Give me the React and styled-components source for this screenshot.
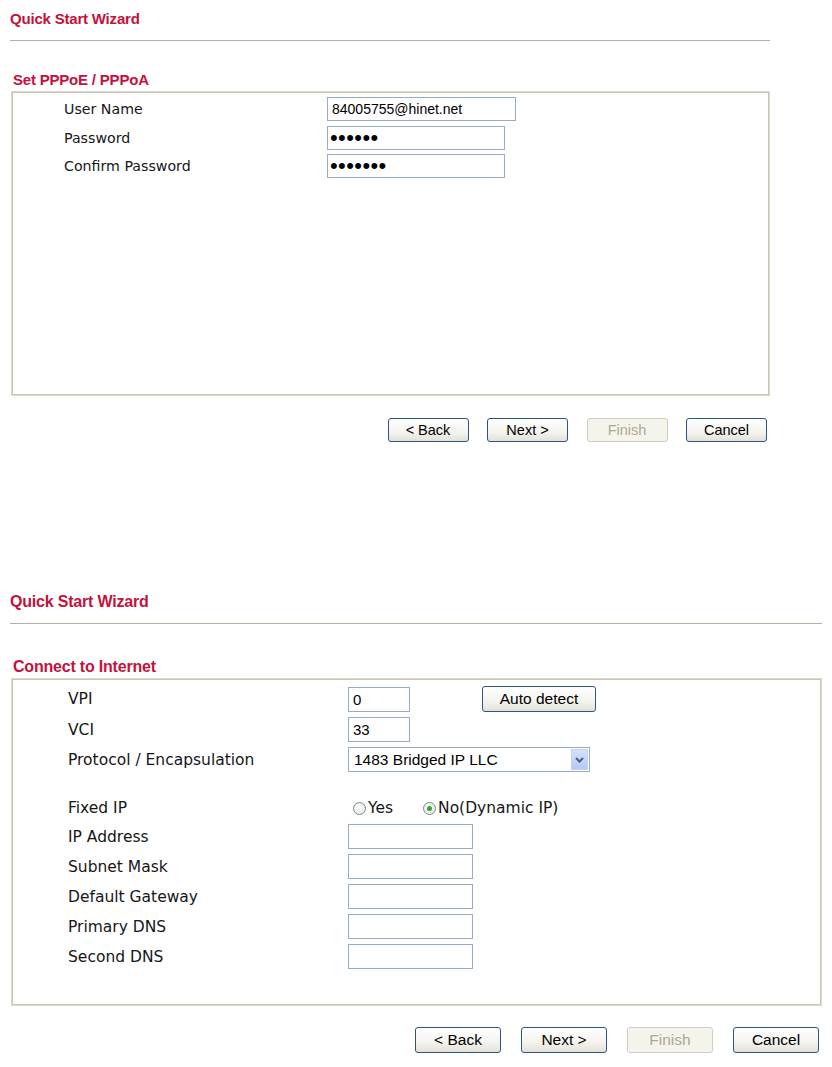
import React from 'react';
import styled, { createGlobalStyle } from 'styled-components';

const GlobalStyle = createGlobalStyle`
  html, body {
    margin: 0;
    padding: 0;
    background: #ffffff;
  }
  body {
    font-family: "DejaVu Sans", Verdana, sans-serif;
    color: #1e1e1e;
  }
`;

const Page = styled.div`
  width: 832px;
  height: 1067px;
  padding-left: 10px;
  box-sizing: border-box;
  overflow: hidden;
`;

const Wizard = styled.section`
  width: ${(p) => p.$width}px;
  padding-top: 9px;
  margin-top: ${(p) => p.$offset || 0}px;
`;

const Title = styled.h1`
  margin: 0;
  height: 20px;
  line-height: 20px;
  font-family: "Liberation Sans", Arial, sans-serif;
  font-weight: bold;
  font-size: ${(p) => p.$size}px;
  color: #c4113c;
  letter-spacing: -0.2px;
`;

const Rule = styled.hr`
  margin: ${(p) => p.$gap}px 0 0;
  border: 0;
  border-top: 1px solid #b3b0a2;
  height: 0;
`;

const SectionTitle = styled.h2`
  margin: ${(p) => p.$gap}px 0 0 3px;
  height: 20px;
  line-height: 20px;
  font-family: "Liberation Sans", Arial, sans-serif;
  font-weight: bold;
  font-size: ${(p) => p.$size}px;
  color: #c4113c;
  letter-spacing: -0.2px;
`;

const Box = styled.div`
  margin: ${(p) => p.$top}px 0 0 1px;
  height: ${(p) => p.$height}px;
  box-sizing: border-box;
  border: 2px solid #c9c6b5;
  outline: 1px solid #ddd9c8;
  outline-offset: -1px;
  padding: ${(p) => p.$padTop}px 0 0 ${(p) => p.$padLeft}px;
`;

const FormGrid = styled.div`
  display: grid;
  grid-template-columns: ${(p) => p.$labelWidth}px 1fr;
  row-gap: ${(p) => p.$gap}px;
  align-items: center;
`;

const Label = styled.div`
  height: ${(p) => p.$h}px;
  display: flex;
  align-items: center;
  font-size: ${(p) => p.$size}px;
  color: #161616;
  white-space: nowrap;
`;

const Spacer = styled.div`
  grid-column: 1 / span 2;
  height: ${(p) => p.$h}px;
`;

const Field = styled.div`
  display: flex;
  align-items: center;
  gap: ${(p) => p.$gap || 0}px;
`;

const TextBox = styled.input`
  width: ${(p) => p.$w}px;
  height: ${(p) => p.$h}px;
  box-sizing: border-box;
  border: 1px solid #98abc8;
  padding: 0 4px;
  margin: 0;
  font-family: "Liberation Sans", Arial, sans-serif;
  font-size: ${(p) => p.$size}px;
  color: #000;
  background: #fff;
  outline: none;
  &[type='password'] {
    font-size: 22px;
    letter-spacing: 0.4px;
    padding: 0 2px;
  }
`;

const SelectWrap = styled.div`
  position: relative;
  width: ${(p) => p.$w}px;
  height: 25px;
`;

const Select = styled.select`
  appearance: none;
  width: 100%;
  height: 100%;
  box-sizing: border-box;
  border: 1px solid #98abc8;
  padding: 0 0 0 5px;
  margin: 0;
  font-family: "Liberation Sans", Arial, sans-serif;
  font-size: 15.5px;
  color: #000;
  background: #fff;
  outline: none;
`;

const ArrowBox = styled.span`
  position: absolute;
  right: 2px;
  top: 2px;
  width: 17px;
  height: 21px;
  background: linear-gradient(#d6e2fb, #b4c8f4);
  border: 1px solid #c4d3f2;
  box-sizing: border-box;
  display: flex;
  align-items: center;
  justify-content: center;
  pointer-events: none;
`;

const RadioGroup = styled.div`
  display: flex;
  align-items: center;
  padding-left: 5px;
  font-size: 15.5px;
`;

const RadioLabel = styled.label`
  display: flex;
  align-items: center;
  margin-right: ${(p) => p.$mr || 0}px;
  color: #161616;
`;

const Radio = styled.input`
  appearance: none;
  width: 13px;
  height: 13px;
  margin: 0 2px 0 0;
  border: 1px solid #7a8797;
  border-radius: 50%;
  background: radial-gradient(circle at 40% 40%, #ffffff, #e2e2dc);
  box-sizing: border-box;
  display: grid;
  place-items: center;
  &:checked::after {
    content: '';
    width: 5px;
    height: 5px;
    border-radius: 50%;
    background: #2ea82e;
  }
`;

const ButtonBar = styled.div`
  display: flex;
  justify-content: flex-end;
  gap: ${(p) => p.$gap}px;
  margin-top: ${(p) => p.$top}px;
  padding-right: ${(p) => p.$right}px;
`;

const Button = styled.button`
  width: ${(p) => p.$w}px;
  height: ${(p) => p.$h}px;
  box-sizing: border-box;
  border: 1px solid #2b5588;
  border-radius: 3px;
  padding: 0;
  margin: 0;
  background: linear-gradient(#ffffff 0%, #f4f3ee 60%, #e3e1d6 100%);
  font-family: "Liberation Sans", Arial, sans-serif;
  font-size: ${(p) => p.$size}px;
  color: #000;
  cursor: default;
  &:disabled {
    border-color: #cfcdc0;
    background: #f5f4ea;
    color: #aca899;
  }
`;

const Chevron = () => (
  <svg width="9" height="6" viewBox="0 0 9 6">
    <path d="M1 1 L4.5 4.5 L8 1" fill="none" stroke="#4b5f86" strokeWidth="2" />
  </svg>
);

const Buttons = ({ w, h, size, gap, top, right }) => (
  <ButtonBar $gap={gap} $top={top} $right={right}>
    <Button $w={w} $h={h} $size={size}>&lt; Back</Button>
    <Button $w={w} $h={h} $size={size}>Next &gt;</Button>
    <Button $w={w} $h={h} $size={size} disabled>Finish</Button>
    <Button $w={w} $h={h} $size={size}>Cancel</Button>
  </ButtonBar>
);

const PppoeWizard = () => (
  <Wizard $width={760}>
    <Title $size={15}>Quick Start Wizard</Title>
    <Rule $gap={11} />
    <SectionTitle $size={15} $gap={29}>Set PPPoE / PPPoA</SectionTitle>
    <Box $top={1} $height={305} $padTop={4} $padLeft={51}>
      <FormGrid $labelWidth={263} $gap={4.5}>
        <Label $h={24} $size={14.2}>User Name</Label>
        <Field>
          <TextBox $w={189} $h={24} $size={14} defaultValue="84005755@hinet.net" />
        </Field>
        <Label $h={24} $size={14.2}>Password</Label>
        <Field>
          <TextBox $w={178} $h={24} type="password" defaultValue="123456" />
        </Field>
        <Label $h={24} $size={14.2}>Confirm Password</Label>
        <Field>
          <TextBox $w={178} $h={24} type="password" defaultValue="1234567" />
        </Field>
      </FormGrid>
    </Box>
    <Buttons w={81} h={24} size={14.5} gap={18.5} top={22} right={3} />
  </Wizard>
);

const ipFields = ['IP Address', 'Subnet Mask', 'Default Gateway', 'Primary DNS', 'Second DNS'];

const InternetWizard = () => (
  <Wizard $width={812} $offset={141}>
    <Title $size={16}>Quick Start Wizard</Title>
    <Rule $gap={11} />
    <SectionTitle $size={16} $gap={33}>Connect to Internet</SectionTitle>
    <Box $top={1} $height={328} $padTop={6} $padLeft={55}>
      <FormGrid $labelWidth={280} $gap={5}>
        <Label $h={25} $size={15.5}>VPI</Label>
        <Field $gap={72}>
          <TextBox $w={62} $h={25} $size={15} defaultValue="0" />
          <Button $w={114} $h={26} $size={15.5}>Auto detect</Button>
        </Field>
        <Label $h={25} $size={15.5}>VCI</Label>
        <Field>
          <TextBox $w={62} $h={25} $size={15} defaultValue="33" />
        </Field>
        <Label $h={25} $size={15.5}>Protocol / Encapsulation</Label>
        <Field>
          <SelectWrap $w={242}>
            <Select defaultValue="llc">
              <option value="llc">1483 Bridged IP LLC</option>
            </Select>
            <ArrowBox>
              <Chevron />
            </ArrowBox>
          </SelectWrap>
        </Field>
        <Spacer $h={15} />
        <Label $h={22} $size={15.5}>Fixed IP</Label>
        <RadioGroup>
          <RadioLabel $mr={30}>
            <Radio type="radio" name="fixed" />
            Yes
          </RadioLabel>
          <RadioLabel>
            <Radio type="radio" name="fixed" defaultChecked />
            No(Dynamic IP)
          </RadioLabel>
        </RadioGroup>
        {ipFields.map((name) => (
          <React.Fragment key={name}>
            <Label $h={25} $size={15.5}>{name}</Label>
            <Field>
              <TextBox $w={125} $h={25} $size={15} defaultValue="" />
            </Field>
          </React.Fragment>
        ))}
      </FormGrid>
    </Box>
    <Buttons w={86} h={26} size={15.5} gap={20} top={21} right={3} />
  </Wizard>
);

const App = () => (
  <>
    <GlobalStyle />
    <Page>
      <PppoeWizard />
      <InternetWizard />
    </Page>
  </>
);

export default App;
